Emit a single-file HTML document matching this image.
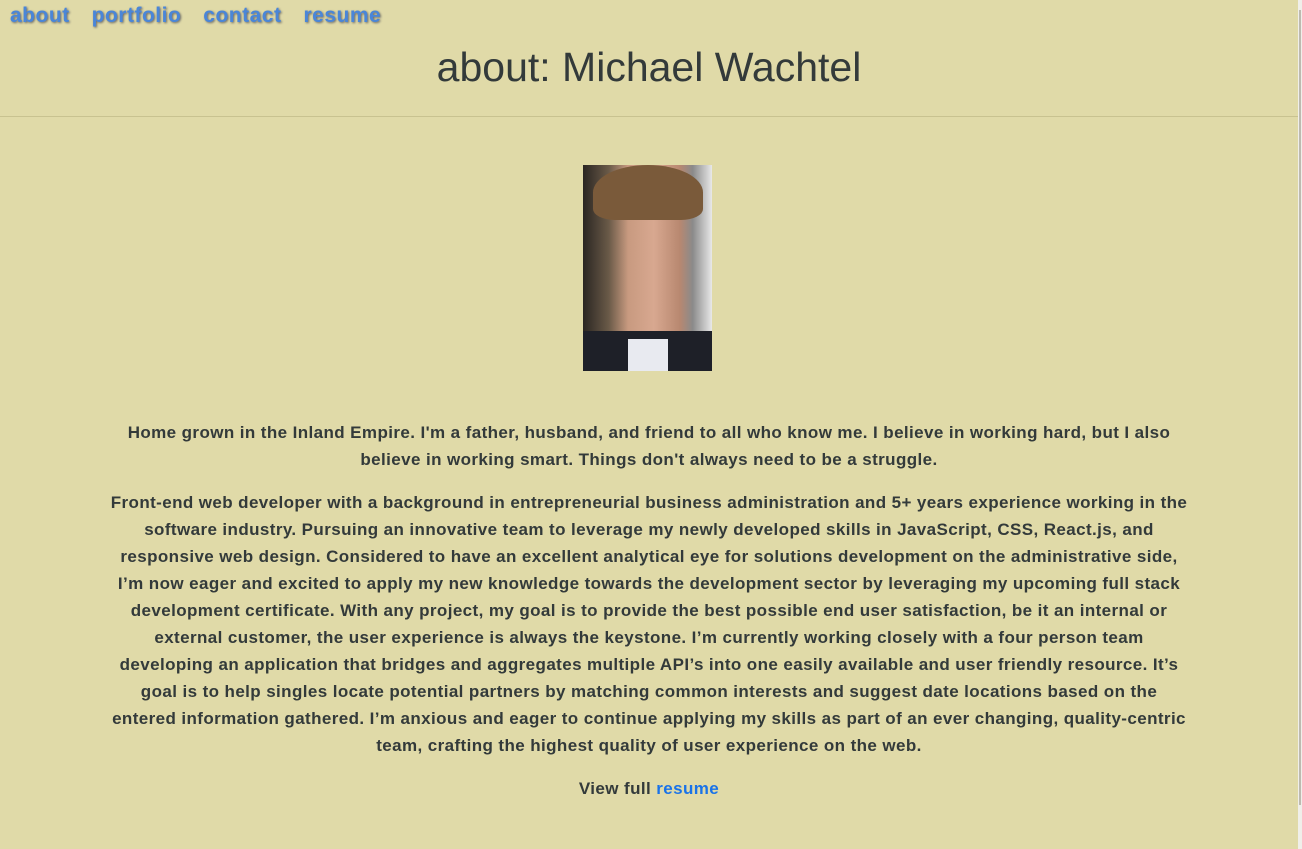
<!DOCTYPE html>
<html><head><style>
html,body{margin:0;padding:0;width:1302px;height:849px;overflow:hidden;background:#e0daa8;}
body{font-family:"Liberation Sans",sans-serif;color:#333a3a;position:relative;}
.sb{position:absolute;right:0;top:0;width:4px;height:849px;background:#f0efea;}
.sb i{position:absolute;left:1px;top:10px;width:2px;height:795px;background:#bdbab0;}
nav{position:absolute;left:10px;top:4px;font-weight:bold;font-size:21px;letter-spacing:0.5px}
nav a{color:#4a86d8;text-decoration:none;margin-right:22px;text-shadow:1px 1px 2px #666;}
h1{position:absolute;left:0;width:1298px;top:44px;margin:0;text-align:center;font-weight:normal;font-size:41px;color:#333a3a;}
.hr{position:absolute;left:0;top:116px;width:1298px;height:1px;background:#c8c290;}
.photo{position:absolute;left:583px;top:165px;width:129px;height:206px;background:linear-gradient(90deg,#2a2622 0,#6a5a48 20%,#c89a80 35%,#d8a890 55%,#b88870 75%,#8a8a8a 85%,#e8e8e8 100%);overflow:hidden}
.photo .hair{position:absolute;left:10px;top:0;width:110px;height:55px;background:#7a5a3a;border-radius:50% 50% 20% 20%}
.photo .suit{position:absolute;left:0;bottom:0;width:129px;height:40px;background:#1e2028}
.photo .shirt{position:absolute;left:45px;bottom:0;width:40px;height:32px;background:#e8eaf0}
.txt{position:absolute;left:0;width:1298px;text-align:center;font-weight:bold;font-size:17px;line-height:27px;white-space:nowrap;letter-spacing:0.4px}
.txt p{margin:0 0 16px}
a.r{color:#1a73e8;text-decoration:none}
</style></head><body>
<nav><a>about</a><a>portfolio</a><a>contact</a><a>resume</a></nav>
<h1>about: Michael Wachtel</h1>
<div class="hr"></div>
<div class="photo"><div class="hair"></div><div class="suit"></div><div class="shirt"></div></div>
<div class="txt" style="top:419px">
<p>Home grown in the Inland Empire. I'm a father, husband, and friend to all who know me. I believe in working hard, but I also<br>believe in working smart. Things don't always need to be a struggle.</p>
<p>Front-end web developer with a background in entrepreneurial business administration and 5+ years experience working in the<br>software industry. Pursuing an innovative team to leverage my newly developed skills in JavaScript, CSS, React.js, and<br>responsive web design. Considered to have an excellent analytical eye for solutions development on the administrative side,<br>I’m now eager and excited to apply my new knowledge towards the development sector by leveraging my upcoming full stack<br>development certificate. With any project, my goal is to provide the best possible end user satisfaction, be it an internal or<br>external customer, the user experience is always the keystone. I’m currently working closely with a four person team<br>developing an application that bridges and aggregates multiple API’s into one easily available and user friendly resource. It’s<br>goal is to help singles locate potential partners by matching common interests and suggest date locations based on the<br>entered information gathered. I’m anxious and eager to continue applying my skills as part of an ever changing, quality-centric<br>team, crafting the highest quality of user experience on the web.</p>
<p>View full <a class="r">resume</a></p>
</div>
<div class="sb"><i></i></div>
</body></html>
